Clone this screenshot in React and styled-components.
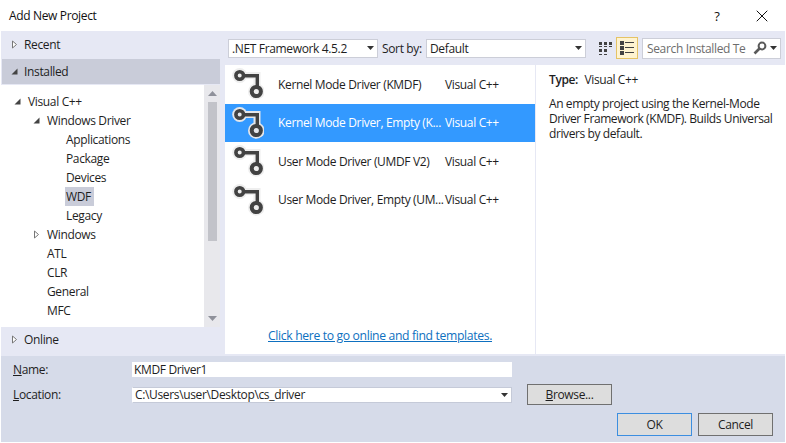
import React from 'react';
import styled, { createGlobalStyle } from 'styled-components';
import { X } from 'lucide-react';

const Global = createGlobalStyle`
    html, body { margin: 0; padding: 0; background: #fff; }
    body { font-family: "Open Sans", "Noto Sans", sans-serif; font-size: 12px; color: #1e1e1e; }
`;

const Dialog = styled.div`
    width: 786px;
    height: 443px;
    display: flex;
    flex-direction: column;
    overflow: hidden;
    background: #fff;
    letter-spacing: -0.35px;
`;

const TitleBar = styled.div`
    height: 31px;
    display: flex;
    align-items: center;
    padding: 0 14px 0 9px;
    font-size: 12px;
    color: #111;
`;

const Title = styled.div`
    flex: 1;
`;

const Help = styled.div`
    width: 12px;
    margin-right: 29px;
    font-size: 13px;
    text-align: center;
`;

const Main = styled.div`
    height: 325px;
    margin: 0 1px;
    display: flex;
    background: #e6e8f4;
`;

const Left = styled.div`
    width: 219px;
    display: flex;
    flex-direction: column;
`;

const Section = styled.div`
    height: ${p => p.$h}px;
    box-sizing: border-box;
    display: flex;
    align-items: center;
    gap: 6px;
    padding: 0 0 ${p => p.$pb || 0}px ${p => (p.$active ? 9 : 10)}px;
    margin: 0 0 ${p => (p.$active ? 1 : 0)}px ${p => (p.$active ? 1 : 0)}px;
    background: ${p => (p.$active ? '#c9ccd9' : 'transparent')};
`;

const TreeWrap = styled.div`
    height: 242px;
    display: flex;
    background: #fff;
`;

const Tree = styled.div`
    flex: 1;
    padding-top: 7px;
`;

const TreeRow = styled.div`
    height: 19px;
    display: flex;
    align-items: center;
    padding-left: ${p => p.$indent}px;
    gap: 6px;
`;

const TreeLabel = styled.span`
    padding: 1px 3px 1px 1px;
    background: ${p => (p.$selected ? '#c9ccd9' : 'transparent')};
`;

const Scrollbar = styled.div`
    width: 16px;
    display: flex;
    flex-direction: column;
    align-items: center;
    background: #e8e8ec;
`;

const ScrollArrow = styled.div`
    height: 17px;
    display: flex;
    align-items: center;
    justify-content: center;
`;

const ScrollThumb = styled.div`
    width: 9px;
    height: 139px;
    background: #c2c3c9;
`;

const ScrollSpace = styled.div`
    flex: 1;
`;

const Center = styled.div`
    flex: 1;
    display: flex;
    flex-direction: column;
    padding: 0 0 2px 5px;
`;

const Toolbar = styled.div`
    height: 34px;
    display: flex;
    align-items: center;
    padding: 0 0 0 3px;
`;

const Combo = styled.div`
    width: ${p => p.$w}px;
    height: 19px;
    flex-shrink: 0;
    box-sizing: border-box;
    display: flex;
    align-items: center;
    justify-content: space-between;
    padding: 0 3px 0 3px;
    background: #fff;
    border: 1px solid #ccced8;
    white-space: nowrap;
`;

const SortLabel = styled.span`
    width: 44px;
    flex-shrink: 0;
    margin: 0 0 0 4px;
    white-space: nowrap;
`;

const ViewButton = styled.div`
    width: 22px;
    height: 22px;
    flex-shrink: 0;
    box-sizing: border-box;
    display: flex;
    align-items: center;
    justify-content: center;
    margin-left: ${p => p.$ml}px;
    background: ${p => (p.$on ? '#fef3d0' : 'transparent')};
    border: 1px solid ${p => (p.$on ? '#e5c365' : 'transparent')};
`;

const Search = styled.div`
    width: 139px;
    height: 21px;
    flex-shrink: 0;
    box-sizing: border-box;
    margin-left: 4px;
    display: flex;
    align-items: center;
    gap: 3px;
    padding: 0 3px 0 4px;
    background: #fff;
    border: 1px solid #ccced8;
`;

const SearchText = styled.div`
    width: 99px;
    margin-right: 4px;
    overflow: hidden;
    white-space: nowrap;
    color: #6d6d6d;
`;

const Panes = styled.div`
    flex: 1;
    display: flex;
    background: #fff;
`;

const ListPane = styled.div`
    width: 310px;
    display: flex;
    flex-direction: column;
    border-right: 1px solid #e6e8f4;
`;

const ProjectRow = styled.div`
    height: 38.5px;
    display: flex;
    align-items: center;
    padding-left: 7px;
    color: ${p => (p.$selected ? '#fff' : '#1e1e1e')};
    background: ${p => (p.$selected ? '#3399ff' : 'transparent')};
`;

const ProjectName = styled.div`
    width: 167px;
    margin-left: 14px;
    white-space: nowrap;
`;

const OnlineLink = styled.a`
    margin: auto 0 10px 43px;
    color: #0e70c0;
    text-decoration: underline;
    font-size: 12.2px;
`;

const Details = styled.div`
    flex: 1;
    padding: 7px 5px 0 13px;
    line-height: 15px;
    letter-spacing: -0.4px;
`;

const TypeLine = styled.div`
    line-height: 16px;
    margin-bottom: 8px;
    b { font-weight: 600; margin-right: 4px; }
`;

const Bottom = styled.div`
    height: 86px;
    margin: 0 1px;
    box-sizing: border-box;
    padding: 1px 0 0 12px;
    background: #d6dbe9;
`;

const FormRow = styled.div`
    height: 25px;
    display: flex;
    align-items: center;
`;

const FormLabel = styled.div`
    width: 119px;
    u { text-decoration: underline; }
`;

const NameInput = styled.div`
    width: 380px;
    height: 15px;
    box-sizing: border-box;
    padding-left: 2px;
    line-height: 15px;
    background: #fff;
`;

const LocationInput = styled.div`
    width: 380px;
    height: 16px;
    box-sizing: border-box;
    display: flex;
    align-items: center;
    justify-content: space-between;
    padding: 0 3px 0 2px;
    background: #fff;
    border: 1px solid #c5cad8;
    border-left-color: #fff;
`;

const Button = styled.div`
    width: ${p => p.$w}px;
    height: ${p => p.$h || 23}px;
    box-sizing: border-box;
    display: flex;
    align-items: center;
    justify-content: center;
    background: #dddddd;
    border: 1px solid ${p => (p.$primary ? '#3c8ee0' : '#707070')};
    u { text-decoration: underline; }
`;

const BrowseButton = styled(Button)`
    margin-left: 15px;
`;

const Actions = styled.div`
    display: flex;
    justify-content: flex-end;
    gap: 6px;
    padding: 6px 12px 0 0;
`;

const Tri = ({ open }) => (
    <svg width="7" height="9" viewBox="0 0 7 9">
        {open
            ? <path d="M6.5 1.5V7.5H0.5Z" fill="#444" />
            : <path d="M1.5 1L5.5 4.5L1.5 8Z" fill="#fff" stroke="#777" />}
    </svg>
);

const ComboArrow = () => (
    <svg width="7" height="4" viewBox="0 0 7 4"><path d="M0 0H7L3.5 4Z" fill="#333" /></svg>
);

const DriverIcon = ({ halo }) => (
    <svg width="32" height="32" viewBox="0 0 32 32">
        <path d="M8 7.5H25V22" fill="none" stroke={halo} strokeWidth="7" />
        <circle cx="7.7" cy="7.5" r="7.5" fill={halo} />
        <circle cx="24.3" cy="23.5" r="8.3" fill={halo} />
        <path d="M10 7.8H25.3V20" fill="none" stroke="#424242" strokeWidth="3.4" />
        <circle cx="7.7" cy="7.5" r="3.8" fill={halo} stroke="#424242" strokeWidth="3.6" />
        <circle cx="24.3" cy="23.5" r="4.6" fill={halo} stroke="#424242" strokeWidth="4" />
    </svg>
);

const GridIcon = () => (
    <svg width="13" height="13" viewBox="0 0 13 13" fill="#424242">
        {[0, 5, 10].map(x => <rect key={x} x={x} y="0" width="3" height="3" />)}
        {[0, 5, 10].map(x => <rect key={x} x={x} y="4" width="3" height="1" />)}
        {[0, 5].map(x => <rect key={x} x={x} y="7" width="3" height="3" />)}
        {[0, 5].map(x => <rect key={x} x={x} y="12" width="3" height="1" />)}
    </svg>
);

const ListIcon = () => (
    <svg width="14" height="14" viewBox="0 0 14 14" fill="#424242">
        {[0, 5, 10].map(y => (
            <g key={y}>
                <rect x="0" y={y} width="4" height="4" />
                <rect x="5" y={y + 1} width="9" height="1" />
            </g>
        ))}
    </svg>
);

const SearchIcon = () => (
    <svg width="14" height="14" viewBox="0 0 14 14" fill="none" stroke="#5a5a5a">
        <circle cx="9" cy="5" r="3.4" strokeWidth="2" />
        <path d="M6.5 7.5L1.5 12.5" strokeWidth="2.6" />
    </svg>
);

const treeItems = [
    { label: 'Visual C++', indent: 13, arrow: 'open' },
    { label: 'Windows Driver', indent: 32, arrow: 'open' },
    { label: 'Applications', indent: 64 },
    { label: 'Package', indent: 64 },
    { label: 'Devices', indent: 64 },
    { label: 'WDF', indent: 64, selected: true },
    { label: 'Legacy', indent: 64 },
    { label: 'Windows', indent: 32, arrow: 'closed' },
    { label: 'ATL', indent: 45 },
    { label: 'CLR', indent: 45 },
    { label: 'General', indent: 45 },
    { label: 'MFC', indent: 45 },
];

const projects = [
    { name: 'Kernel Mode Driver (KMDF)' },
    { name: 'Kernel Mode Driver, Empty (K...', selected: true },
    { name: 'User Mode Driver (UMDF V2)' },
    { name: 'User Mode Driver, Empty (UM...' },
];

export default function App() {
    return (
        <Dialog>
            <Global />
            <TitleBar>
                <Title>Add New Project</Title>
                <Help>?</Help>
                <X size={20} strokeWidth={1.2} color="#111" />
            </TitleBar>
            <Main>
                <Left>
                    <Section $h={28} $pb={2}><Tri />Recent</Section>
                    <Section $h={25} $active><Tri open />Installed</Section>
                    <TreeWrap>
                        <Tree>
                            {treeItems.map(item => (
                                <TreeRow key={item.label} $indent={item.indent}>
                                    {item.arrow && <Tri open={item.arrow === 'open'} />}
                                    <TreeLabel $selected={item.selected}>{item.label}</TreeLabel>
                                </TreeRow>
                            ))}
                        </Tree>
                        <Scrollbar>
                            <ScrollArrow>
                                <svg width="9" height="5" viewBox="0 0 9 5"><path d="M0 5H9L4.5 0Z" fill="#8f919a" /></svg>
                            </ScrollArrow>
                            <ScrollThumb />
                            <ScrollSpace />
                            <ScrollArrow>
                                <svg width="9" height="5" viewBox="0 0 9 5"><path d="M0 0H9L4.5 5Z" fill="#8f919a" /></svg>
                            </ScrollArrow>
                        </Scrollbar>
                    </TreeWrap>
                    <Section $h={29} $pb={5}><Tri />Online</Section>
                </Left>
                <Center>
                    <Toolbar>
                        <Combo $w={150}>.NET Framework 4.5.2<ComboArrow /></Combo>
                        <SortLabel>Sort by:</SortLabel>
                        <Combo $w={160}>Default<ComboArrow /></Combo>
                        <ViewButton $ml={8}><GridIcon /></ViewButton>
                        <ViewButton $ml={0} $on><ListIcon /></ViewButton>
                        <Search>
                            <SearchText>Search Installed Ter</SearchText>
                            <SearchIcon />
                            <ComboArrow />
                        </Search>
                    </Toolbar>
                    <Panes>
                        <ListPane>
                            {projects.map(p => (
                                <ProjectRow key={p.name} $selected={p.selected}>
                                    <DriverIcon halo={p.selected ? '#e4e6ea' : '#eeeeee'} />
                                    <ProjectName>{p.name}</ProjectName>
                                    Visual C++
                                </ProjectRow>
                            ))}
                            <OnlineLink>Click here to go online and find templates.</OnlineLink>
                        </ListPane>
                        <Details>
                            <TypeLine><b>Type:</b> Visual C++</TypeLine>
                            An empty project using the Kernel-Mode Driver Framework (KMDF). Builds Universal drivers by default.
                        </Details>
                    </Panes>
                </Center>
            </Main>
            <Bottom>
                <FormRow>
                    <FormLabel><u>N</u>ame:</FormLabel>
                    <NameInput>KMDF Driver1</NameInput>
                </FormRow>
                <FormRow>
                    <FormLabel><u>L</u>ocation:</FormLabel>
                    <LocationInput>C:\Users\user\Desktop\cs_driver<ComboArrow /></LocationInput>
                    <BrowseButton $w={85} $h={21}><span><u>B</u>rowse...</span></BrowseButton>
                </FormRow>
                <Actions>
                    <Button $w={75} $primary>OK</Button>
                    <Button $w={75}>Cancel</Button>
                </Actions>
            </Bottom>
        </Dialog>
    );
}
